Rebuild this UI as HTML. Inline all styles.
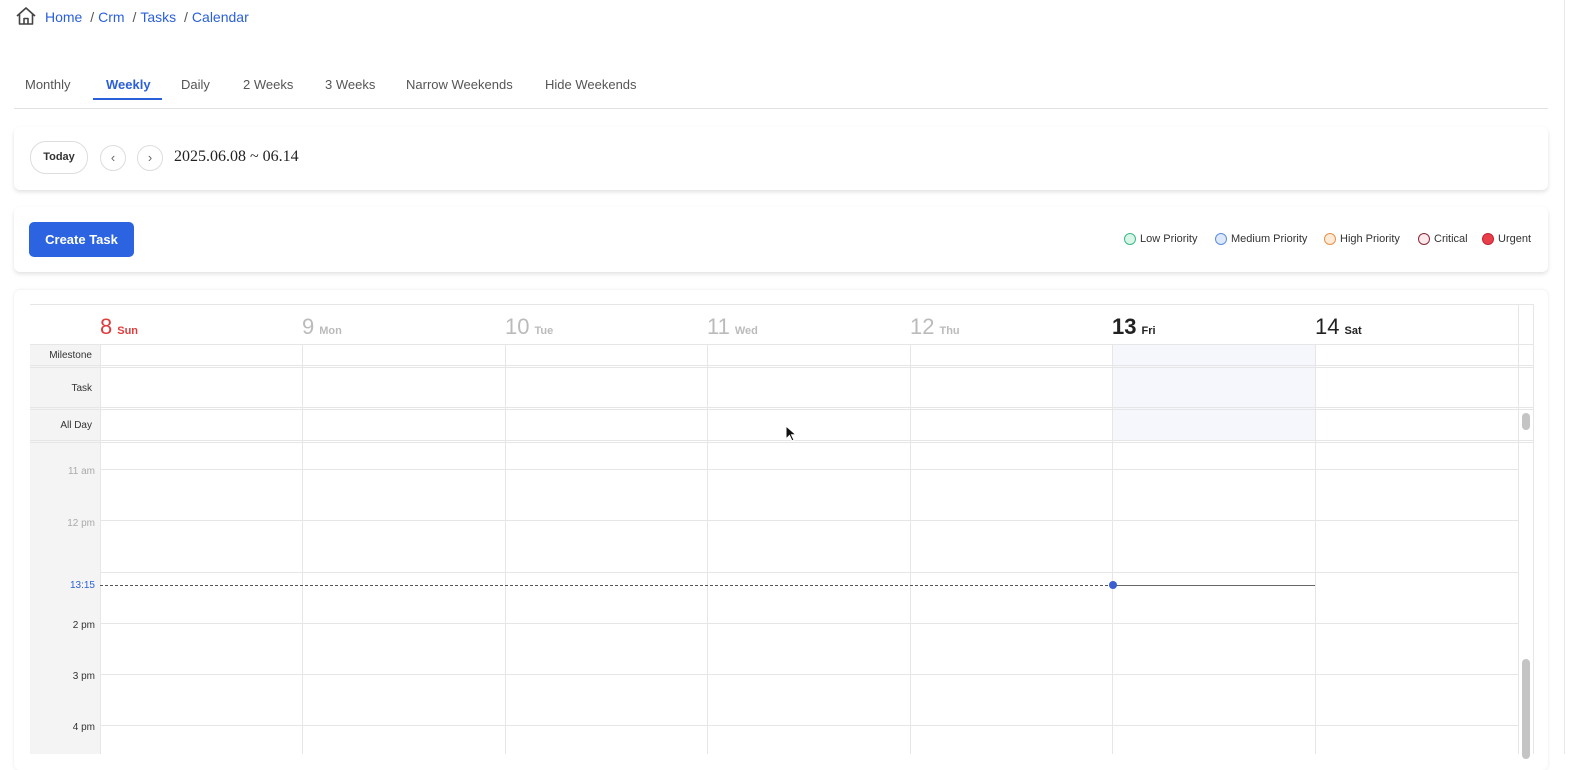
<!DOCTYPE html>
<html><head><style>
body{margin:0;width:1594px;height:754px;overflow:hidden;background:#fff;font-family:"Liberation Sans",sans-serif;position:relative}
.a{position:absolute}
.bc{top:9px;left:45px;font-size:14px;color:#2b5fd9}
.bc span{color:#555;margin:0 4px}
.tab{top:77px;font-size:13px;color:#555}
.card{left:14px;width:1534px;background:#fff;border-radius:6px;box-shadow:0 2px 4px rgba(0,0,0,.12)}
.h{background:#e6e6e6}
.v{background:#e6e6e6;width:1px}
.gut{background:#f4f4f4}
.lbl{font-size:10px;color:#333;text-align:right;width:62px;left:30px}
.tl{font-size:10px;color:#aaa;text-align:right;width:65px;left:30px}
.dn{font-size:22px;top:314px}
.dn small{font-size:11px;font-weight:bold;margin-left:5px}
.lg{top:233px;font-size:11px;color:#333;display:flex;align-items:center}
.lg i{display:inline-block;width:10px;height:10px;border-radius:50%;margin-right:4px;border:1px solid}
</style></head><body>
<svg class="a" style="left:15px;top:6px" width="22" height="20" viewBox="0 0 22 20"><path d="M2 10 L11 2 L20 10 M4.5 8 V18 H17.5 V8 M9 18 V12.5 H13 V18" fill="none" stroke="#444" stroke-width="1.6" stroke-linejoin="round"/></svg>
<div class="a bc">Home <span>/</span>Crm <span>/</span>Tasks <span>/</span>Calendar</div>
<div class="a tab" style="left:25px">Monthly</div>
<div class="a tab" style="left:106px;color:#2b5fd9;font-weight:bold">Weekly</div>
<div class="a" style="left:93px;top:98px;width:69px;height:2px;background:#2b5fd9"></div>
<div class="a tab" style="left:181px">Daily</div>
<div class="a tab" style="left:243px">2 Weeks</div>
<div class="a tab" style="left:325px">3 Weeks</div>
<div class="a tab" style="left:406px">Narrow Weekends</div>
<div class="a tab" style="left:545px">Hide Weekends</div>
<div class="a" style="left:14px;top:108px;width:1534px;height:1px;background:#e2e2e2"></div>
<div class="a" style="left:1564px;top:0;width:1px;height:754px;background:#e8e8e8"></div>

<div class="a card" style="top:127px;height:63px"></div>
<div class="a" style="left:30px;top:141px;width:56px;height:31px;border:1px solid #ddd;border-radius:16px;font-size:11px;font-weight:bold;color:#333;text-align:center;line-height:31px">Today</div>
<div class="a" style="left:100px;top:145px;width:24px;height:24px;border:1px solid #ddd;border-radius:50%;text-align:center;line-height:23px;color:#666;font-size:13px">‹</div>
<div class="a" style="left:137px;top:145px;width:24px;height:24px;border:1px solid #ddd;border-radius:50%;text-align:center;line-height:23px;color:#666;font-size:13px">›</div>
<div class="a" style="left:174px;top:148px;font-family:'Liberation Serif',serif;font-size:16px;color:#222">2025.06.08 ~ 06.14</div>

<div class="a card" style="top:207px;height:65px"></div>
<div class="a" style="left:29px;top:222px;width:105px;height:35px;background:#2b63e0;border-radius:5px;color:#fff;font-size:13px;font-weight:bold;text-align:center;line-height:35px">Create Task</div>
<div class="a lg" style="left:1124px"><i style="border-color:#3cb98a;background:#d8f5e8"></i>Low Priority</div>
<div class="a lg" style="left:1215px"><i style="border-color:#5b8de0;background:#dde8fb"></i>Medium Priority</div>
<div class="a lg" style="left:1324px"><i style="border-color:#e8904a;background:#fdebd8"></i>High Priority</div>
<div class="a lg" style="left:1418px"><i style="border-color:#8b2a3a;background:#fde8ec"></i>Critical</div>
<div class="a lg" style="left:1482px"><i style="border-color:#c82030;background:#e8404a"></i>Urgent</div>

<div class="a card" style="top:290px;height:480px;box-shadow:0 0 3px rgba(0,0,0,.1)"></div>
<div class="a gut" style="left:30px;top:344px;width:70px;height:410px"></div>
<div class="a" style="left:1113px;top:344px;width:202px;height:96px;background:#f5f7fc"></div>
<div class="a h" style="left:30px;top:304px;width:1503px;height:1px"></div>
<div class="a h" style="left:30px;top:344px;width:1503px;height:1px"></div>
<div class="a h" style="left:30px;top:365px;width:1503px;height:1px"></div>
<div class="a h" style="left:30px;top:367px;width:1503px;height:1px"></div>
<div class="a h" style="left:30px;top:407px;width:1503px;height:1px"></div>
<div class="a h" style="left:30px;top:409px;width:1503px;height:1px"></div>
<div class="a h" style="left:30px;top:440px;width:1503px;height:1px"></div>
<div class="a h" style="left:30px;top:442px;width:1503px;height:1px"></div>
<div class="a h" style="left:100px;top:469px;width:1418px;height:1px"></div>
<div class="a h" style="left:100px;top:520px;width:1418px;height:1px"></div>
<div class="a h" style="left:100px;top:572px;width:1418px;height:1px"></div>
<div class="a h" style="left:100px;top:623px;width:1418px;height:1px"></div>
<div class="a h" style="left:100px;top:674px;width:1418px;height:1px"></div>
<div class="a h" style="left:100px;top:725px;width:1418px;height:1px"></div>
<div class="a v" style="left:100px;top:344px;height:410px"></div>
<div class="a v" style="left:302px;top:344px;height:410px"></div>
<div class="a v" style="left:505px;top:344px;height:410px"></div>
<div class="a v" style="left:707px;top:344px;height:410px"></div>
<div class="a v" style="left:910px;top:344px;height:410px"></div>
<div class="a v" style="left:1112px;top:344px;height:410px"></div>
<div class="a v" style="left:1315px;top:344px;height:410px"></div>
<div class="a v" style="left:1518px;top:304px;height:450px"></div>
<div class="a v" style="left:1533px;top:304px;height:450px"></div>
<div class="a" style="left:1522px;top:413px;width:8px;height:17px;background:#c4c4c4;border-radius:4px"></div>
<div class="a" style="left:1522px;top:659px;width:8px;height:100px;background:#c4c4c4;border-radius:4px"></div>

<div class="a dn" style="left:100px;color:#e03c3c">8<small>Sun</small></div>
<div class="a dn" style="left:302px;color:#bbb">9<small>Mon</small></div>
<div class="a dn" style="left:505px;color:#bbb">10<small>Tue</small></div>
<div class="a dn" style="left:707px;color:#bbb">11<small>Wed</small></div>
<div class="a dn" style="left:910px;color:#bbb">12<small>Thu</small></div>
<div class="a dn" style="left:1112px;color:#222;font-weight:bold">13<small>Fri</small></div>
<div class="a dn" style="left:1315px;color:#222">14<small>Sat</small></div>

<div class="a lbl" style="top:350px">Milestone</div>
<div class="a lbl" style="top:383px">Task</div>
<div class="a lbl" style="top:420px">All Day</div>
<div class="a tl" style="top:466px">11 am</div>
<div class="a tl" style="top:518px">12 pm</div>
<div class="a tl" style="top:580px;color:#2b5fd9">13:15</div>
<div class="a tl" style="top:620px;color:#333">2 pm</div>
<div class="a tl" style="top:671px;color:#333">3 pm</div>
<div class="a tl" style="top:722px;color:#333">4 pm</div>
<div class="a" style="left:100px;top:585px;width:1013px;border-top:1px dashed #555"></div>
<div class="a" style="left:1113px;top:585px;width:202px;height:1px;background:#666"></div>
<div class="a" style="left:1109px;top:581px;width:8px;height:8px;border-radius:50%;background:#3b5fd0"></div>
<svg class="a" style="left:785px;top:425px" width="12" height="17" viewBox="0 0 12 17"><path d="M1 1 V14 L4.5 10.5 L7 16 L9 15 L6.5 9.8 H11 Z" fill="#111" stroke="#fff" stroke-width="1"/></svg>
</body></html>
